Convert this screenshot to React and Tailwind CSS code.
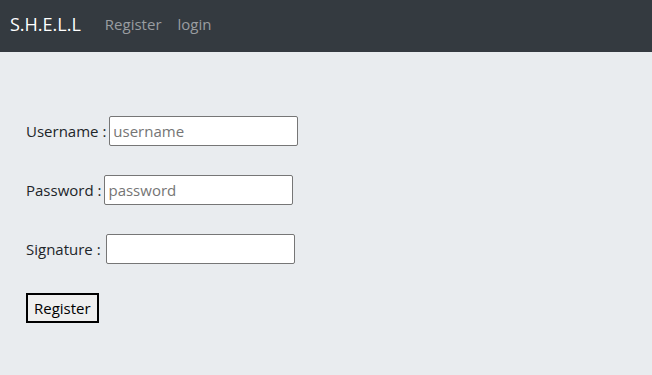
import React, { useState } from 'react';

export default function App() {
    const [formData, setFormData] = useState({ username: '', password: '', signature: '' });

    const handleChange = (e) => {
        setFormData({ ...formData, [e.target.name]: e.target.value });
    };

    return (
        <div className="min-h-[375px] bg-[#e9ecef] text-[#212529]" style={{ fontFamily: '"Open Sans", sans-serif' }}>
            {/* Navbar */}
            <nav className="h-[52px] bg-[#343a40] flex items-center px-[10px] pb-[3px]">
                <span className="text-[18px] text-white mr-[24px]">S.H.E.L.L</span>
                <a className="text-[15px] text-[#9a9da0] mr-[16px]">Register</a>
                <a className="text-[15px] text-[#9a9da0]">login</a>
            </nav>

            {/* Form */}
            <form className="pt-[64px] pl-[26px] flex flex-col items-start gap-[29px]">
                <div className="flex items-center h-[30px] text-[15px]">
                    <label className="mr-[3px]">Username :</label>
                    <input
                        name="username"
                        placeholder="username"
                        value={formData.username}
                        onChange={handleChange}
                        className="w-[189px] h-[30px] bg-white border border-[#767676] rounded-[2px] px-[3px] text-[15px] placeholder:text-[#757575] outline-none"
                    />
                </div>
                <div className="flex items-center h-[30px] text-[15px]">
                    <label className="mr-[3px]">Password :</label>
                    <input
                        name="password"
                        type="text"
                        placeholder="password"
                        value={formData.password}
                        onChange={handleChange}
                        className="w-[189px] h-[30px] bg-white border border-[#767676] rounded-[2px] px-[3px] text-[15px] placeholder:text-[#757575] outline-none"
                    />
                </div>
                <div className="flex items-center h-[30px] text-[15px]">
                    <label className="mr-[5px]">Signature :</label>
                    <input
                        name="signature"
                        value={formData.signature}
                        onChange={handleChange}
                        className="w-[189px] h-[30px] bg-white border border-[#767676] rounded-[2px] px-[3px] text-[15px] outline-none"
                    />
                </div>
                <button type="button" className="h-[30px] px-[6px] bg-[#efefef] border-2 border-black text-[15px] text-black">
                    Register
                </button>
            </form>
        </div>
    );
}
